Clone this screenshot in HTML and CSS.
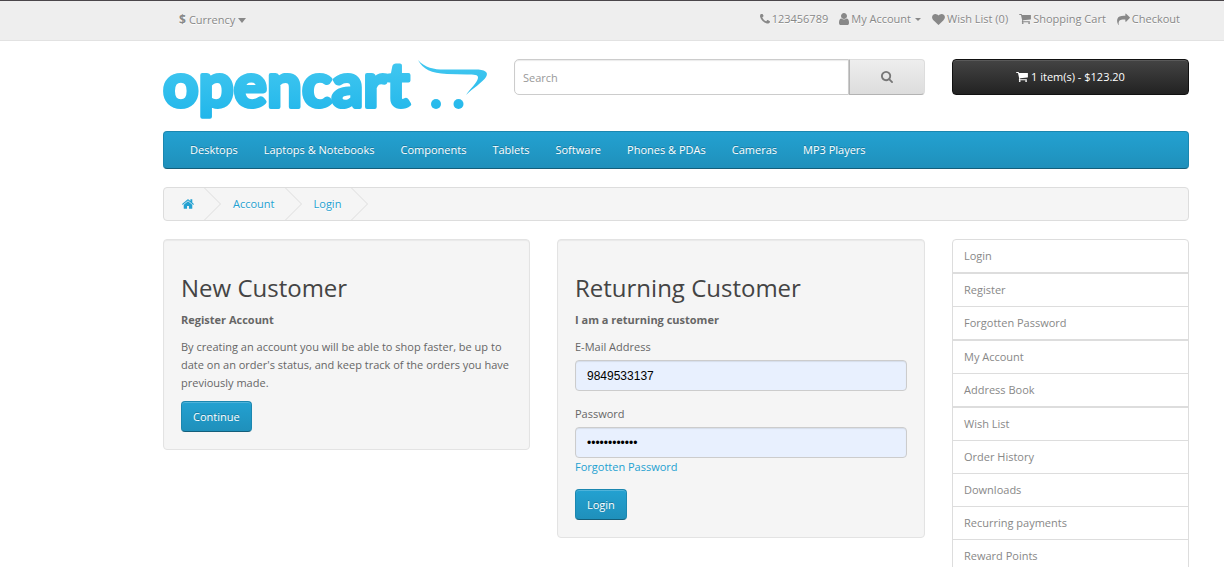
FILE: index.html
```html
<!DOCTYPE html>
<html lang="en">
<head>
<meta charset="utf-8">
<title>Account Login</title>
<link rel="stylesheet" href="styles.css">
</head>
<body>
<svg class="sprite" aria-hidden="true">
  <symbol id="cart" viewBox="64 256 1664 1408"><path d="M704 1536q0 52-38 90t-90 38-90-38-38-90 38-90 90-38 90 38 38 90zm896 0q0 52-38 90t-90 38-90-38-38-90 38-90 90-38 90 38 38 90zm128-1088v512q0 24-16.5 42.5t-40.5 21.5l-1044 122q13 60 13 70 0 16-24 64h920q26 0 45 19t19 45-19 45-45 19h-1024q-26 0-45-19t-19-45q0-11 8-31.5t16-36 21.5-40 15.5-29.5l-177-823h-204q-26 0-45-19t-19-45 19-45 45-19h256q16 0 28.5 6.5t19.5 15.5 13 24.5 8 26 5.5 29.5 4.5 26h1201q26 0 45 19t19 45z"/></symbol>
  <symbol id="chevron" viewBox="0 0 17 32"><path d="M0.5 0L16.5 16L0.5 32" fill="none" stroke="#dddddd"/></symbol>
</svg>
<nav class="topbar">
  <button class="currency" type="button"><strong>$</strong> <span>Currency</span><svg class="caret-lg" viewBox="0 0 8 5"><path d="M0 0h8L4 5z"/></svg></button>
  <ul class="top-links">
    <li><a href="#"><svg class="i-phone" viewBox="192 192 1408 1408"><path d="M1600 1240q0 27-10 70.5t-21 68.5q-21 50-122 106-94 51-186 51-27 0-53-3.5t-57.5-12.5-47-14.5-55.5-20.5-49-18q-98-35-175-83-127-79-264-216t-216-264q-48-77-83-175-3-9-18-49t-20.5-55.5-14.5-47-12.5-57.5-3.5-53q0-92 51-186 56-101 106-122 25-11 68.5-21t70.5-10q14 0 21 3 18 6 53 76 11 19 30 54t35 63.5 31 53.5q3 4 17.5 25t21.5 35.5 7 28.5q0 20-28.5 50t-62 55-62 53-28.5 46q0 9 5 22.5t8.5 20.5 14 24 11.5 19q76 137 174 235t235 174q2 1 19 11.5t24 14 20.5 8.5 22.5 5q18 0 46-28.5t53-62 55-62 50-28.5q14 0 28.5 7t35.5 21.5 25 17.5q25 15 53.5 31t63.5 35 54 30q70 35 76 53 3 7 3 21z"/></svg>123456789</a></li>
    <li><a href="#"><svg class="i-user" viewBox="256 128 1280 1536"><path d="M1536 1399q0 109-62.5 187t-150.5 78h-854q-88 0-150.5-78t-62.5-187q0-85 8.5-160.5t31.5-152 58.5-131 94-89 134.5-34.5q131 128 313 128t313-128q76 0 134.5 34.5t94 89 58.5 131 31.5 152 8.5 160.5zm-256-887q0 159-112.5 271.5t-271.5 112.5-271.5-112.5-112.5-271.5 112.5-271.5 271.5-112.5 271.5 112.5 112.5 271.5z"/></svg>My Account <svg class="caret-sm" viewBox="0 0 6 3"><path d="M0 0h6L3 3z"/></svg></a></li>
    <li><a href="#"><svg class="i-heart" viewBox="0 128 1792 1536"><path d="M896 1664q-26 0-44-18l-624-602q-10-8-27.5-26t-55.5-65.5-68-97.5-53.5-121-23.5-138q0-220 127-344t351-124q62 0 126.5 21.5t120 58 95.5 68.5 76 68q36-36 76-68t95.5-68.5 120-58 126.5-21.5q224 0 351 124t127 344q0 221-229 450l-623 600q-18 18-44 18z"/></svg>Wish List (0)</a></li>
    <li><a href="#"><svg class="i-cart"><use href="#cart"/></svg>Shopping Cart</a></li>
    <li><a href="#"><svg class="i-share" viewBox="0 128 1792 1536"><path d="M1792 640q0 26-19 45l-512 512q-19 19-45 19t-45-19-19-45v-256h-224q-98 0-175.5 6t-154 21.5-133 42.5-105.5 69.5-80 101-48.5 138.5-17.5 181q0 55 5 123 0 6 2.5 23.5t2.5 26.5q0 15-8.5 25t-23.5 10q-16 0-28-17-7-9-13-22t-13.5-30-10.5-24q-127-285-127-451 0-199 53-333 162-403 875-403h224v-256q0-26 19-45t45-19 45 19l512 512q19 19 19 45z"/></svg>Checkout</a></li>
  </ul>
</nav>
<div class="container">
  <header class="header">
    <a class="logo" href="#" aria-label="opencart">
      <svg viewBox="0 0 324 63">
        <defs><linearGradient id="brand" gradientUnits="userSpaceOnUse" x1="0" y1="0" x2="0" y2="63"><stop offset="0" stop-color="#43c8f0"/><stop offset="1" stop-color="#1fb5ea"/></linearGradient></defs>
        <text class="wordmark" x="0" y="48" fill="url(#brand)" stroke="url(#brand)">opencart</text>
        <path fill="url(#brand)" d="M255 1C262 9 271 10.500 281 10.500L312 10.500C322 10.500 326 13 323 18C320 23 309 30 303 36C307 30 314 24 315 19C315.500 15.500 311 15.500 304 15.500L284 15C268 14.500 260 10 255 1z"/>
        <circle cx="273" cy="45" r="5" fill="url(#brand)"/><circle cx="295.500" cy="45" r="5" fill="url(#brand)"/>
      </svg>
    </a>
    <form class="search">
      <input type="text" placeholder="Search" aria-label="Search">
      <button type="button" aria-label="Search"><svg viewBox="64 128 1664 1664"><path d="M1216 832q0-185-131.500-316.500t-316.500-131.500-316.500 131.500-131.500 316.500 131.500 316.500 316.500 131.500 316.500-131.500 131.500-316.500zm512 832q0 52-38 90t-90 38q-54 0-90-38l-343-342q-179 124-399 124-143 0-273.500-55.500t-225-150-150-225-55.500-273.500 55.500-273.500 150-225 225-150 273.500-55.500 273.500 55.500 225 150 150 225 55.500 273.500q0 220-124 399l343 343q37 37 37 90z"/></svg></button>
    </form>
    <button class="cart" type="button"><svg class="i-cart"><use href="#cart"/></svg>1 item(s) - $123.20</button>
  </header>
  <nav class="menu">
    <a href="#">Desktops</a><a href="#">Laptops &amp; Notebooks</a><a href="#">Components</a><a href="#">Tablets</a><a href="#">Software</a><a href="#">Phones &amp; PDAs</a><a href="#">Cameras</a><a href="#">MP3 Players</a>
  </nav>
  <ul class="breadcrumb">
    <li><a href="#" aria-label="Home"><svg class="i-home" viewBox="89 253 1614 1283"><path d="M1472 992v480q0 26-19 45t-45 19h-384v-384h-256v384h-384q-26 0-45-19t-19-45v-480q0-1 .5-3t.5-3l575-474 575 474q1 2 1 6zm223-69l-62 74q-8 9-21 11h-3q-13 0-21-7l-692-577-692 577q-12 8-24 7-13-2-21-11l-62-74q-8-10-7-23.500t11-21.500l719-599q32-26 76-26t76 26l244 204v-195q0-14 9-23t23-9h192q14 0 23 9t9 23v408l219 182q10 8 11 21.500t-7 23.500z"/></svg></a><svg class="chevron"><use href="#chevron"/></svg></li>
    <li><a href="#">Account</a><svg class="chevron"><use href="#chevron"/></svg></li>
    <li><a href="#">Login</a><svg class="chevron"><use href="#chevron"/></svg></li>
  </ul>
  <main class="content">
    <section class="well">
      <h2>New Customer</h2>
      <p><strong>Register Account</strong></p>
      <p>By creating an account you will be able to shop faster, be up to date on an order's status, and keep track of the orders you have previously made.</p>
      <button class="primary" type="button">Continue</button>
    </section>
    <section class="well">
      <h2>Returning Customer</h2>
      <p><strong>I am a returning customer</strong></p>
      <form>
        <div class="field">
          <label for="email">E-Mail Address</label>
          <input id="email" type="text" value="9849533137">
        </div>
        <div class="field">
          <label for="password">Password</label>
          <input id="password" type="password" value="abcdefghijkl">
          <a href="#">Forgotten Password</a>
        </div>
        <button class="primary" type="button">Login</button>
      </form>
    </section>
    <aside class="side">
      <a class="group" href="#">Login</a>
      <a href="#">Register</a>
      <a class="group" href="#">Forgotten Password</a>
      <a href="#">My Account</a>
      <a class="group" href="#">Address Book</a>
      <a href="#">Wish List</a>
      <a href="#">Order History</a>
      <a href="#">Downloads</a>
      <a href="#">Recurring payments</a>
      <a href="#">Reward Points</a>
    </aside>
  </main>
</div>
</body>
</html>
```
FILE: styles.css
```css
* { box-sizing: border-box; }
html { overflow: hidden; }
body { margin: 0; background: #fff; color: #666; font: 400 11px/18px "Open Sans", sans-serif; }
a { color: #23a1d1; text-decoration: none; }
ul { margin: 0; padding: 0; list-style: none; }
button, input { font: inherit; margin: 0; }
svg { display: block; flex: none; fill: currentColor; }
.sprite { position: absolute; width: 0; height: 0; }

.topbar { display: flex; justify-content: space-between; align-items: center; min-height: 41px; padding: 0 44px 3px 179px; background: #eee; border-top: 1px solid #4a464a; border-bottom: 1px solid #e2e2e2; color: #888; text-shadow: 0 1px 0 #fff; }
.currency { display: flex; align-items: center; gap: 3px; padding: 2px 0 0; border: 0; background: none; color: #888; text-shadow: inherit; }
.currency strong { font-size: 12px; }
.caret-lg { width: 8px; height: 5px; }
.caret-sm { width: 6px; height: 3px; margin-left: 2px; }
.top-links { display: flex; gap: 11px; }
.top-links a { display: flex; align-items: center; gap: 2px; color: #888; }
.i-phone { width: 10px; height: 10px; }
.i-user { width: 10px; height: 12px; }
.i-heart { width: 13px; height: 11px; }
.i-cart { width: 12px; height: 10px; }
.i-share { width: 13px; height: 11px; overflow: visible; }
.i-home { width: 12px; height: 10px; }

.container { padding: 18px 35px 0 163px; }
.header { display: grid; grid-template-columns: 324fr 411fr 237fr; column-gap: 27px; align-items: start; margin-bottom: 9px; }
.logo svg { width: 100%; height: auto; overflow: visible; }
.wordmark { font: 700 62px "Lato", sans-serif; stroke-width: 4px; stroke-linejoin: round; }
.search { display: flex; }
.search input { flex: 1; min-width: 0; height: 36px; padding: 0 8px; border: 1px solid #ccc; border-radius: 5px 0 0 5px; box-shadow: inset 0 1px 1px rgba(0,0,0,.08); color: #555; }
.search input::placeholder { color: #999; }
.search button { display: flex; align-items: center; justify-content: center; width: 76px; height: 36px; border: 1px solid #ddd; border-color: #ddd #ddd #b3b3b3 #b3b3b3; border-radius: 0 4px 4px 0; background: linear-gradient(#eee, #ddd); color: #777; }
.search button svg { width: 12px; height: 12px; }
.cart { display: flex; align-items: center; justify-content: center; gap: 3px; height: 36px; border: 1px solid #111; border-radius: 4px; background: linear-gradient(#444, #222); box-shadow: inset 0 1px 0 #5a5a5a; color: #fff; }

.menu { display: flex; flex-wrap: wrap; gap: 0 26px; min-height: 38px; padding: 9px 26px; border: 1px solid #1b87b0; border-bottom-color: #145e7a; border-radius: 4px; background: linear-gradient(#23a1d1, #1f90bb); }
.menu a { color: #fff; text-shadow: 0 -1px 0 rgba(0,0,0,.25); }
.breadcrumb { display: flex; margin: 18px 0; padding-left: 6px; border: 1px solid #ddd; border-radius: 4px; background: #f5f5f5; text-shadow: 0 1px 0 #fff; }
.breadcrumb li { display: flex; align-items: center; gap: 10px; padding-left: 12px; }
.chevron { width: 17px; height: 32px; }

.content { display: grid; grid-template-columns: 367fr 368fr 237fr; column-gap: 27px; align-items: start; }
.well { padding: 17px; border: 1px solid #e3e3e3; border-radius: 4px; background: #f5f5f5; box-shadow: inset 0 1px 1px rgba(0,0,0,.05); }
h2 { margin: 18px 0 11px; color: #444; font-size: 24px; font-weight: 400; line-height: 25px; }
p { margin: 0 0 9px; }
.field { display: flex; flex-direction: column; align-items: flex-start; margin-bottom: 14px; }
.field:last-of-type { margin-bottom: 13px; }
.field label { margin-bottom: 4px; }
.field input { width: 100%; height: 31px; padding: 0 11px; border: 1px solid #ccc; border-radius: 4px; background: #e8f0fe; box-shadow: inset 0 1px 1px rgba(0,0,0,.08); color: #000; font: 12px "Liberation Sans", sans-serif; }
.primary { display: block; height: 31px; padding: 0 11px; border: 1px solid #1b87b0; border-bottom-color: #145e7a; border-radius: 4px; background: linear-gradient(#23a1d1, #1f90bb); box-shadow: inset 0 1px 0 rgba(255,255,255,.2); color: #fff; text-shadow: 0 -1px 0 rgba(0,0,0,.25); }
.side { display: flex; flex-direction: column; border: 1px solid #ddd; border-radius: 4px; }
.side a { padding: 7px 11px; border-bottom: 1px solid #ddd; color: #888; }
.side .group { border-bottom-width: 2px; }
```
